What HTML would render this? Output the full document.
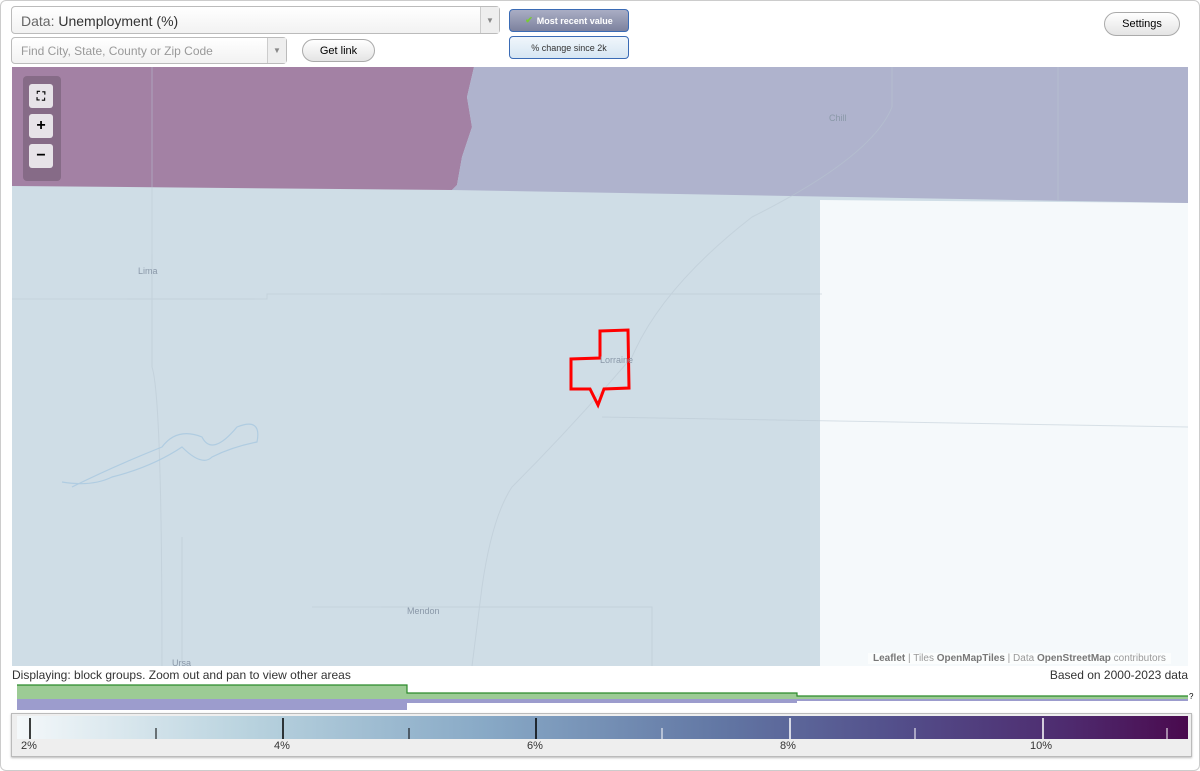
<!DOCTYPE html>
<html><head><style>
body{margin:0;width:1200px;height:771px;overflow:hidden;font-family:"Liberation Sans",sans-serif;background:#fff;}
.frame{position:absolute;left:0;top:0;width:1198px;height:769px;border:1px solid #ccc;border-radius:6px;}
.sel{position:absolute;background:linear-gradient(#fff,#f2f2f2);border:1px solid #bbb;border-radius:4px;box-sizing:border-box;}
.arrow{position:absolute;right:0;top:0;bottom:0;width:18px;border-left:1px solid #ccc;background:#eee;color:#888;font-size:8px;display:flex;align-items:center;justify-content:center;}
.btn{position:absolute;border:1px solid #aaa;border-radius:12px;background:linear-gradient(#fff,#e4e4e4);font-size:11px;display:flex;align-items:center;justify-content:center;box-sizing:border-box;}
.tb{position:absolute;border:1px solid #3a6bb5;border-radius:4px;box-sizing:border-box;font-size:9px;display:flex;align-items:center;justify-content:center;}
.lbl{position:absolute;font-size:9px;color:#8a98a8;}
.zb{position:absolute;left:29px;width:24px;height:24px;background:#e7e3e8;border-radius:3px;font-weight:bold;font-size:16px;display:flex;align-items:center;justify-content:center;}
</style></head><body>
<div class="frame"></div>
<div class="sel" style="left:11px;top:6px;width:489px;height:28px;font-size:14px;padding:6px 9px;color:#666">Data: <span style="color:#333">Unemployment (%)</span><div class="arrow">▼</div></div>
<div class="sel" style="left:11px;top:37px;width:276px;height:27px;font-size:12px;padding:6px 9px;color:#999">Find City, State, County or Zip Code<div class="arrow">▼</div></div>
<div class="btn" style="left:302px;top:39px;width:73px;height:23px">Get link</div>
<div class="tb" style="left:509px;top:9px;width:120px;height:23px;background:linear-gradient(#a9adc4,#7d829e);color:#fff;font-weight:bold"><span style="color:#7c3;margin-right:4px">✔</span>Most recent value</div>
<div class="tb" style="left:509px;top:36px;width:120px;height:23px;background:linear-gradient(#f0f6fb,#d6e6f3);color:#333">% change since 2k</div>
<div class="btn" style="left:1104px;top:12px;width:76px;height:24px">Settings</div>

<svg style="position:absolute;left:12px;top:67px" width="1176" height="599">
<rect width="1176" height="599" fill="#cfdde6"/>
<polygon points="808,133 1176,136 1176,599 808,599" fill="#f5f9fb"/>
<polygon points="0,0 462,0 455,30 460,60 450,90 445,118 440,123 0,119" fill="#a381a4"/>
<polygon points="462,0 1176,0 1176,136 440,123 445,118 450,90 460,60 455,30" fill="#afb3cd"/>
<g fill="none" stroke="#b9c7d2" stroke-width="1" opacity="0.5">
<path d="M140,0 V300 Q150,330 150,599"/>
<path d="M880,0 V40 Q860,90 740,150 Q650,220 620,290 Q560,360 500,420 Q480,450 470,520 L460,599"/>
<path d="M590,350 L1176,360"/>
<path d="M0,232 H255 V227 H810"/>
<path d="M300,540 H640 V599"/>
<path d="M170,470 V599"/>
<path d="M1046,0 V133"/>
</g>
<path d="M60,420 Q100,400 150,380 Q165,360 190,370 Q200,390 225,360 Q250,350 245,375 Q220,380 200,390 Q190,400 170,380 Q140,400 100,410 Q80,420 50,415" fill="none" stroke="#a8c8e0" stroke-width="1.2" opacity="0.8"/>
<polygon points="588,264 616,263 617,321 592,322 586,338 578,322 559,322 559,292 588,291" fill="none" stroke="#f00" stroke-width="3"/>
</svg>
<div class="lbl" style="left:829px;top:113px">Chill</div>
<div class="lbl" style="left:138px;top:266px">Lima</div>
<div class="lbl" style="left:407px;top:606px">Mendon</div>
<div class="lbl" style="left:600px;top:355px">Lorraine</div>
<div class="lbl" style="left:172px;top:658px">Ursa</div>
<div style="position:absolute;left:23px;top:76px;width:38px;height:105px;background:rgba(100,80,100,.45);border-radius:4px"></div>
<div class="zb" style="top:84px;font-size:12px">⛶</div>
<div class="zb" style="top:114px">+</div>
<div class="zb" style="top:144px">−</div>
<div style="position:absolute;left:868px;top:653px;font-size:10px;color:#999;background:rgba(255,255,255,.6);padding:0 5px"><b style="color:#777">Leaflet</b> | Tiles <b style="color:#777">OpenMapTiles</b> | Data <b style="color:#777">OpenStreetMap</b> contributors</div>
<div style="position:absolute;left:12px;top:668px;font-size:12px;color:#333">Displaying: block groups. Zoom out and pan to view other areas</div>
<div style="position:absolute;right:12px;top:668px;font-size:12px;color:#333">Based on 2000-2023 data</div>
<svg style="position:absolute;left:0;top:680px" width="1200" height="34">
<polygon points="17,5 407,5 407,13 797,13 797,16 1188,16 1188,19 17,19" fill="#9ccb95"/>
<polyline points="17,5 407,5 407,13 797,13 797,16 1188,16" fill="none" stroke="#2b8a2b" stroke-width="1.2"/>
<polygon points="17,19 1188,19 1188,21 797,21 797,23 407,23 407,30 17,30" fill="#9c9ccd"/>
<text x="1189" y="19" font-size="8" font-family="Liberation Sans">?</text>
</svg>
<div style="position:absolute;left:11px;top:713px;width:1179px;height:42px;border:1px solid #bbb;background:#eee;box-shadow:0 1px 2px #bbb"></div>
<div style="position:absolute;left:17px;top:716px;width:1171px;height:23px;background:linear-gradient(90deg,#f4f8fa,#b8d2de 20%,#88a9c6 40%,#6277a4 60%,#534f8b 75%,#4e2a6e 90%,#4a0a4e)"></div>
<svg style="position:absolute;left:0;top:716px" width="1200" height="23">
<g stroke="#000" stroke-width="1.5"><path d="M30,2V23M283,2V23M536,2V23"/></g>
<g stroke="#000" stroke-width="1"><path d="M156,12V23M409,12V23"/></g>
<g stroke="#fff" stroke-width="1.5"><path d="M790,2V23M1043,2V23"/></g>
<g stroke="#fff" stroke-width="1"><path d="M662,12V23M915,12V23M1167,12V23"/></g>
</svg>
<div style="position:absolute;top:740px;font-size:11px;color:#333;left:21px">2%</div>
<div style="position:absolute;top:740px;font-size:11px;color:#333;left:274px">4%</div>
<div style="position:absolute;top:740px;font-size:11px;color:#333;left:527px">6%</div>
<div style="position:absolute;top:740px;font-size:11px;color:#333;left:780px">8%</div>
<div style="position:absolute;top:740px;font-size:11px;color:#333;left:1030px">10%</div>
</body></html>
